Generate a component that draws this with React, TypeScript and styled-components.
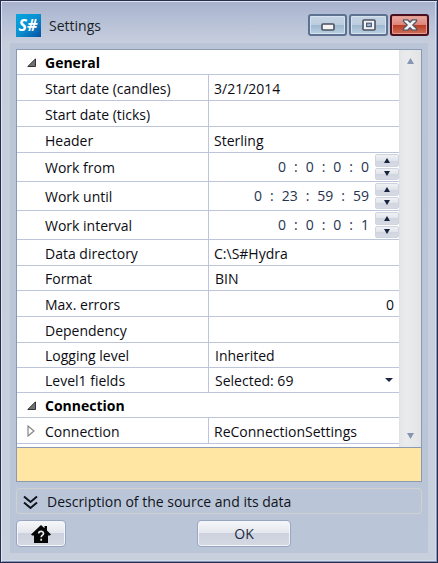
import React from "react";
import styled, { createGlobalStyle } from "styled-components";

const GlobalStyle = createGlobalStyle`
  * { box-sizing: border-box; }
  body { margin: 0; }
  body, button, input, select {
    font-family: "Open Sans", "Noto Sans", sans-serif;
    font-size: 14px;
    color: #0c0c14;
  }
`;

const Window = styled.div`
  display: flex;
  flex-direction: column;
  height: 100vh;
  padding: 0 8px 9px;
  border: 1px solid #272e4c;
  box-shadow: inset 1px 1px #dfe4f2, inset -1px -1px #8496bd, inset -2px -2px #d3daea;
  background: linear-gradient(#a7b1cd 0, #b5bfd5 18px, #c6cedd 42px, #c8cfdd 100%);
`;

const TitleBar = styled.header`
  display: flex;
  align-items: center;
  flex: none;
  height: 42px;
  padding: 12px 0 6px 7px;
  gap: 8px;
`;

const Title = styled.h1`
  flex: 1;
  margin: 0;
  padding-top: 2px;
  font-size: 14px;
  font-weight: 400;
  line-height: 20px;
  color: #1a1e28;
`;

const Logo = styled.svg`
  flex: none;
  width: 25px;
  height: 23px;
`;

const WindowButtons = styled.div`
  display: flex;
  gap: 2px;
`;

const WindowButton = styled.button<{ $danger?: boolean }>`
  display: grid;
  place-items: center;
  width: 39px;
  height: 22px;
  padding: 0;
  border: 2px solid ${(p) => (p.$danger ? "#4b1020" : "#5c7290")};
  border-radius: 3px;
  box-shadow: inset 0 0 0 1px ${(p) => (p.$danger ? "#e59b90" : "#d6e2ef")};
  background: ${(p) =>
    p.$danger
      ? "linear-gradient(#e8aaa2, #de8377 50%, #b93a22 50%, #d2705a)"
      : "linear-gradient(#c6d5e5, #bccddf 50%, #9db7cd 50%, #b9d0e2)"};
`;

const Client = styled.main`
  display: flex;
  flex-direction: column;
  flex: 1;
  min-height: 0;
  margin: 0 1px;
  padding: 6px;
  background: #bac6d8;
`;

const Panel = styled.section`
  display: flex;
  flex-direction: column;
  flex: 1;
  min-height: 0;
  border: 1px solid #8b99b2;
  background: #fff;
`;

const Scroller = styled.div`
  display: flex;
  flex: 1;
  min-height: 0;
  overflow: hidden;
`;

const Grid = styled.div`
  flex: 1;
  min-width: 0;
`;

const ScrollBar = styled.div`
  display: flex;
  flex-direction: column;
  justify-content: space-between;
  align-items: center;
  flex: none;
  width: 22px;
  padding: 6px 0;
  border-left: 1px solid #dfe1e4;
  background: linear-gradient(90deg, #e4e6e8, #eaebec 30%, #e3e4e6);
`;

const ScrollButton = styled.button`
  display: grid;
  place-items: center;
  width: 18px;
  height: 10px;
  padding: 0;
  border: 0;
  background: none;
`;

const Row = styled.div<{ $height: number }>`
  display: grid;
  grid-template-columns: 28px 163px 1fr;
  align-items: center;
  height: ${(p) => p.$height}px;
  border-bottom: 1px solid #bcc5da;
`;

const Toggle = styled.button`
  display: grid;
  place-items: center;
  width: 28px;
  height: 20px;
  padding: 0;
  border: 0;
  background: none;
`;

const GroupName = styled.h2`
  grid-column: 2 / -1;
  margin: 0;
  padding-top: 2px;
  font-size: 14px;
  font-weight: 700;
  line-height: 20px;
  color: #000;
`;

const Name = styled.label`
  grid-column: 2;
  padding-top: 2px;
  line-height: 20px;
  white-space: nowrap;
`;

const Cell = styled.div`
  display: flex;
  align-items: center;
  height: 100%;
  min-width: 0;
  border-left: 1px solid #bcc5da;
`;

const TextBox = styled.input<{ $right?: boolean }>`
  width: 100%;
  min-width: 0;
  height: 22px;
  padding: 2px 5px 0;
  border: 0;
  outline: 0;
  background: none;
  text-align: ${(p) => (p.$right ? "right" : "left")};
`;

const SelectBox = styled.select`
  appearance: none;
  flex: 1;
  min-width: 0;
  height: 20px;
  padding: 0 6px;
  border: 0;
  outline: 0;
  background: none;
`;

const Arrow = styled.svg`
  flex: none;
  margin-right: 6px;
`;

const TimeBox = styled.div`
  display: flex;
  flex: 1;
  justify-content: flex-end;
  align-items: baseline;
  gap: 8px;
  padding-right: 6px;
  line-height: 20px;
  color: #26344f;
`;

const Segment = styled.input<{ $digits: number }>`
  width: ${(p) => p.$digits * 8}px;
  height: 20px;
  padding: 0;
  border: 0;
  outline: 0;
  background: none;
  color: #26344f;
`;

const Spinner = styled.div`
  display: flex;
  flex-direction: column;
  width: 24px;
  height: 100%;
  padding: 1px 0;
  gap: 1px;
`;

const SpinButton = styled.button`
  display: grid;
  place-items: center;
  flex: 1;
  min-height: 0;
  width: 100%;
  padding: 0;
  border: 1px solid #d0d4df;
  border-radius: 2px;
  background: linear-gradient(#eff1f5, #e0e4ea 50%, #d0d5df 50%, #d6dae4);
`;

const Hint = styled.div`
  flex: none;
  height: 34px;
  border-top: 1px solid #8b99b2;
  background: #ffe6a2;
`;

const Expander = styled.button`
  display: flex;
  align-items: center;
  flex: none;
  gap: 9px;
  height: 26px;
  margin-top: 6px;
  padding: 2px 6px 0;
  border: 1px solid #d2d1d1;
  border-radius: 4px;
  background: none;
  line-height: 20px;
  text-align: left;
  white-space: nowrap;
  color: #10131c;
`;

const Footer = styled.footer`
  display: grid;
  grid-template-columns: 1fr auto 1fr;
  column-gap: 25px;
  flex: none;
  padding: 6px 0 0;
`;

const PushButton = styled.button<{ $wide?: boolean }>`
  display: grid;
  place-items: center;
  width: ${(p) => (p.$wide ? 94 : 50)}px;
  height: 27px;
  padding: 0;
  border: 1px solid #98a6c2;
  border-radius: 4px;
  box-shadow: inset 0 0 0 1px #f4f6fa;
  background: linear-gradient(#f6f7fa, #e3e6ec 48%, #cdd2de 50%, #d5d9e3);
  color: #1e2b45;
`;

const FooterStart = styled.div`
  display: flex;
  min-width: 156px;
`;

type Item =
  | { kind: "text"; name: string; value: string; height: number; right?: boolean; expandable?: boolean }
  | { kind: "select"; name: string; value: string; height: number; arrow?: boolean }
  | { kind: "time"; name: string; value: string[]; height: number };

const general: Item[] = [
  { kind: "text", name: "Start date (candles)", value: "3/21/2014", height: 26 },
  { kind: "text", name: "Start date (ticks)", value: "", height: 26 },
  { kind: "text", name: "Header", value: "Sterling", height: 26 },
  { kind: "time", name: "Work from", value: ["0", "0", "0", "0"], height: 29 },
  { kind: "time", name: "Work until", value: ["0", "23", "59", "59"], height: 29 },
  { kind: "time", name: "Work interval", value: ["0", "0", "0", "1"], height: 29 },
  { kind: "text", name: "Data directory", value: "C:\\S#Hydra", height: 26 },
  { kind: "select", name: "Format", value: "BIN", height: 25 },
  { kind: "text", name: "Max. errors", value: "0", height: 26, right: true },
  { kind: "text", name: "Dependency", value: "", height: 26 },
  { kind: "select", name: "Logging level", value: "Inherited", height: 25 },
  { kind: "select", name: "Level1 fields", value: "Selected: 69", height: 25, arrow: true },
];

const connection: Item[] = [
  { kind: "text", name: "Connection", value: "ReConnectionSettings", height: 26, expandable: true },
];

const units = ["days", "hours", "minutes", "seconds"];

function Triangle({ down, color, size = 6 }: { down?: boolean; color: string; size?: number }) {
  return (
    <svg width={size} height={size - 1} viewBox="0 0 6 5" aria-hidden="true">
      <path d={down ? "M0 0h6L3 5z" : "M0 5h6L3 0z"} fill={color} />
    </svg>
  );
}

function Value({ item, id }: { item: Item; id: string }) {
  if (item.kind === "text") {
    return <TextBox id={id} type="text" defaultValue={item.value} $right={item.right} />;
  }
  if (item.kind === "select") {
    return (
      <>
        <SelectBox id={id}>
          <option>{item.value}</option>
        </SelectBox>
        {item.arrow && (
          <Arrow width="8" height="4" viewBox="0 0 8 4" aria-hidden="true">
            <path d="M0 0h8L4 4z" fill="#1c2740" />
          </Arrow>
        )}
      </>
    );
  }
  return (
    <>
      <TimeBox>
        {item.value.map((part, i) => (
          <React.Fragment key={units[i]}>
            {i > 0 && <span>:</span>}
            <Segment
              id={i === 0 ? id : undefined}
              aria-label={`${item.name} ${units[i]}`}
              type="text"
              defaultValue={part}
              $digits={part.length}
            />
          </React.Fragment>
        ))}
      </TimeBox>
      <Spinner>
        <SpinButton aria-label={`Increase ${item.name}`}>
          <Triangle color="#17233f" />
        </SpinButton>
        <SpinButton aria-label={`Decrease ${item.name}`}>
          <Triangle down color="#17233f" />
        </SpinButton>
      </Spinner>
    </>
  );
}

function Property({ item }: { item: Item }) {
  const id = item.name.toLowerCase().replace(/[^a-z0-9]+/g, "-");
  return (
    <Row $height={item.height}>
      {item.kind === "text" && item.expandable && (
        <Toggle aria-label={`Expand ${item.name}`}>
          <svg width="8" height="12" viewBox="0 0 8 12" aria-hidden="true">
            <path d="M1 1v10L7 6z" fill="#fff" stroke="#858585" strokeWidth="1.2" />
          </svg>
        </Toggle>
      )}
      <Name htmlFor={id}>{item.name}</Name>
      <Cell>
        <Value item={item} id={id} />
      </Cell>
    </Row>
  );
}

function Group({ name, items }: { name: string; items: Item[] }) {
  return (
    <>
      <Row $height={25}>
        <Toggle aria-label={`Collapse ${name}`}>
          <svg width="9" height="9" viewBox="0 0 9 9" aria-hidden="true">
            <path d="M8.5 .8v7.7H.8z" fill="#727272" stroke="#333" />
          </svg>
        </Toggle>
        <GroupName>{name}</GroupName>
      </Row>
      {items.map((item) => (
        <Property key={item.name} item={item} />
      ))}
    </>
  );
}

export default function App() {
  return (
    <>
      <GlobalStyle />
      <Window>
        <TitleBar>
          <Logo viewBox="0 0 25 23" role="img" aria-label="S#">
            <defs>
              <linearGradient id="logo" x1="0" y1="0" x2="1" y2="1">
                <stop offset="0" stopColor="#07a5df" />
                <stop offset=".5" stopColor="#0b8fd0" />
                <stop offset="1" stopColor="#0450a0" />
              </linearGradient>
            </defs>
            <rect width="25" height="23" fill="url(#logo)" />
            <text
              x="12"
              y="17"
              textAnchor="middle"
              fontFamily="Open Sans, sans-serif"
              fontSize="16"
              fontWeight="700"
              fontStyle="italic"
              fill="#fff"
            >
              S#
            </text>
          </Logo>
          <Title>Settings</Title>
          <WindowButtons>
            <WindowButton aria-label="Minimize">
              <svg width="14" height="12" viewBox="0 0 14 12">
                <rect x="1" y="5" width="12" height="6" rx="1" fill="#f4f4f4" stroke="#4b5260" strokeWidth="1.6" />
              </svg>
            </WindowButton>
            <WindowButton aria-label="Maximize">
              <svg width="14" height="12" viewBox="0 0 14 12">
                <rect x="1" y="1" width="12" height="10" rx="1" fill="#f4f4f4" stroke="#4b5260" strokeWidth="1.6" />
                <rect x="4.6" y="4.2" width="4.8" height="3.4" fill="#9db7d0" stroke="#4b5d80" strokeWidth="1.2" />
              </svg>
            </WindowButton>
            <WindowButton aria-label="Close" $danger>
              <svg width="16" height="12" viewBox="0 0 16 12">
                <path
                  d="M1.5 .8h4L8 3.2 10.5 .8h4v1.6L10.8 6l3.7 3.6v1.6h-4L8 8.8 5.5 11.2h-4V9.6L5.2 6 1.5 2.4z"
                  fill="#f2f2f2"
                  stroke="#4f5563"
                  strokeWidth="1.3"
                  strokeLinejoin="round"
                />
              </svg>
            </WindowButton>
          </WindowButtons>
        </TitleBar>
        <Client>
          <Panel>
            <Scroller>
              <Grid>
                <Group name="General" items={general} />
                <Group name="Connection" items={connection} />
              </Grid>
              <ScrollBar>
                <ScrollButton aria-label="Scroll up">
                  <Triangle color="#8795b0" size={7} />
                </ScrollButton>
                <ScrollButton aria-label="Scroll down">
                  <Triangle down color="#8795b0" size={7} />
                </ScrollButton>
              </ScrollBar>
            </Scroller>
            <Hint />
          </Panel>
          <Expander aria-expanded="false">
            <svg width="15" height="15" viewBox="0 0 15 15" fill="none" stroke="#10131c" strokeWidth="2" aria-hidden="true">
              <path d="M1 1.5l6.5 5.5L14 1.5M1 7.5l6.5 5.5L14 7.5" />
            </svg>
            Description of the source and its data
          </Expander>
          <Footer>
            <FooterStart>
              <PushButton aria-label="Home help">
                <svg width="20" height="20" viewBox="0 0 20 20" aria-hidden="true">
                  <path d="M10 1l3.5 3.2V2H16v4.5l4 4-1.2 1H17V19H3v-7.5H1.2L0 10.5z" fill="#050505" />
                  <path
                    d="M7.7 9.6c0-3 4.8-3 4.8-.2 0 1.9-2.3 1.7-2.3 3.8M10.2 14.7v2"
                    fill="none"
                    stroke="#e6e9ef"
                    strokeWidth="1.7"
                  />
                </svg>
              </PushButton>
            </FooterStart>
            <PushButton $wide>OK</PushButton>
          </Footer>
        </Client>
      </Window>
    </>
  );
}
